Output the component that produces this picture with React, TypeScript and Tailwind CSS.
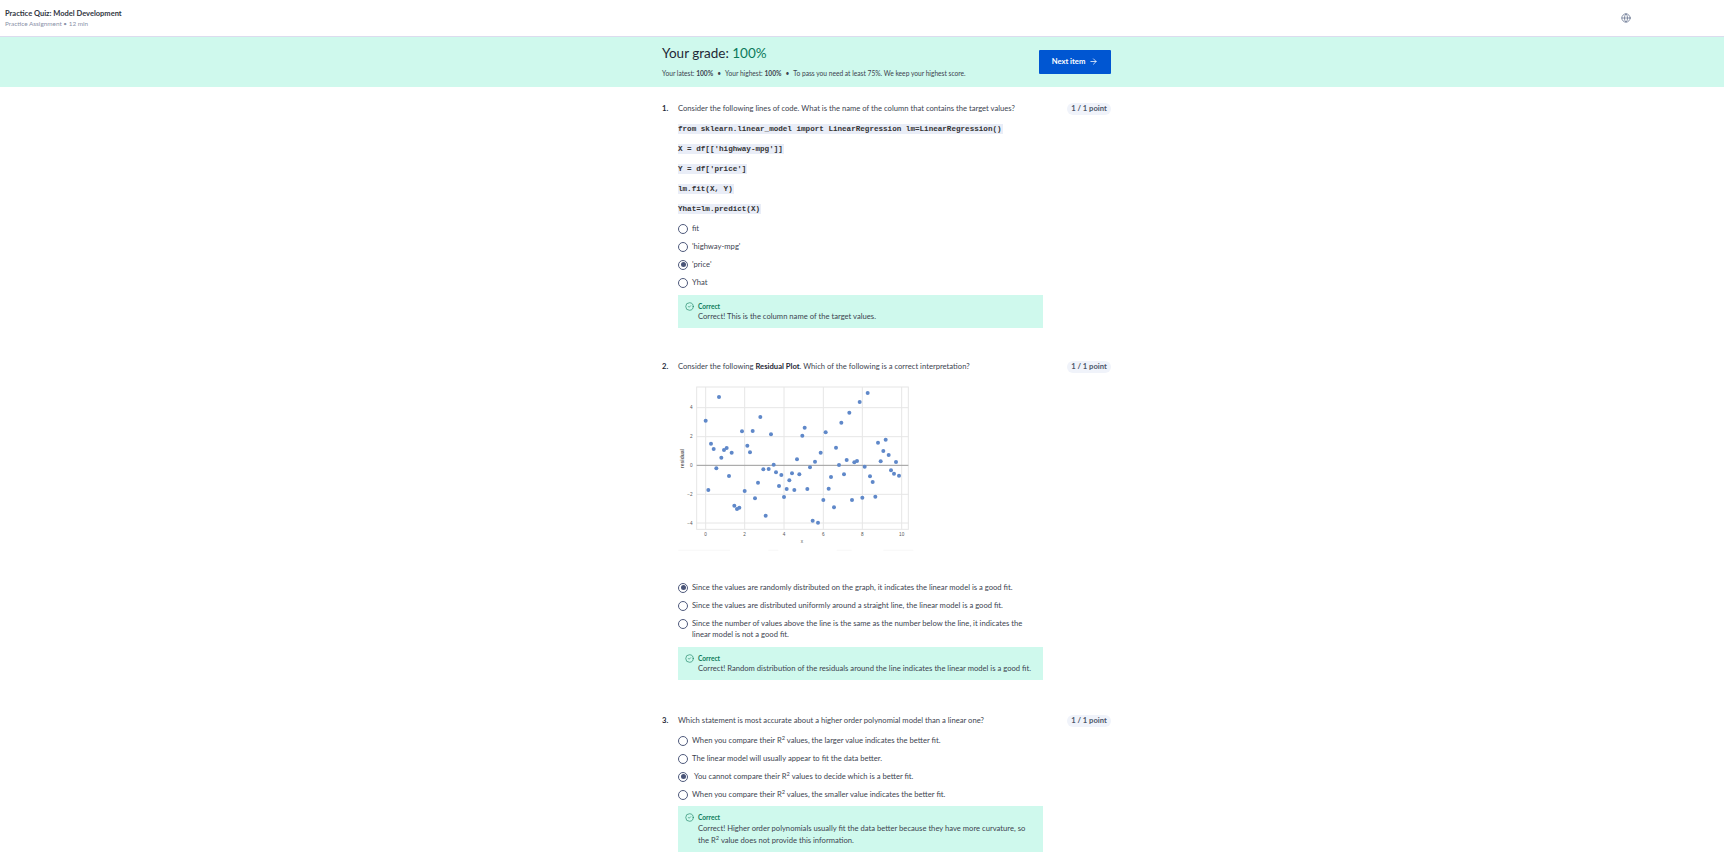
import { ArrowRight, CircleCheck, Globe } from "lucide-react";
import type { ReactNode } from "react";

const dots = [
  [107, 134], [115, 342], [123, 203], [131, 219], [139, 277], [147, 63], [154, 245], [162, 222], [170, 216], [177, 300],
  [185, 230], [193, 389], [201, 399], [208, 395], [216, 166], [224, 345], [232, 209], [240, 229], [248, 165], [255, 367],
  [264, 320], [271, 123], [280, 280], [287, 419], [296, 279], [303, 175], [311, 266], [318, 289], [327, 330], [334, 297],
  [342, 363], [350, 339], [358, 313], [366, 292], [373, 342], [381, 250], [388, 295], [397, 179], [404, 155], [412, 339],
  [420, 274], [428, 434], [435, 257], [444, 440], [452, 230], [460, 372], [467, 169], [476, 338], [483, 303], [492, 394],
  [498, 215], [507, 267], [514, 140], [522, 295], [530, 252], [538, 110], [546, 372], [553, 259], [561, 255], [569, 78],
  [577, 365], [584, 272], [593, 51], [600, 301], [608, 318], [616, 362], [624, 200], [632, 256], [640, 225], [647, 191],
  [656, 237], [663, 283], [672, 293], [678, 258], [687, 299],
];

const xTicks = [[107, "0"], [224, "2"], [342, "4"], [460, "6"], [577, "8"], [695, "10"]] as const;
const yTicks = [[95, "4"], [182, "2"], [268, "0"], [355, "−2"], [441, "−4"]] as const;

const codeLines = [
  "from sklearn.linear_model import LinearRegression lm=LinearRegression()",
  "X = df[['highway-mpg']]",
  "Y = df['price']",
  "lm.fit(X, Y)",
  "Yhat=lm.predict(X)",
];

function QuestionRow({ n, children, className }: { n: number; children: ReactNode; className: string }) {
  return (
    <div className={`flex items-start ${className}`}>
      <span className="w-[16px] font-bold leading-[12px] text-[#1f2937]">{n}.</span>
      <p className="flex-1 leading-[12px] text-[#3d4450]">{children}</p>
      <span className="mt-[1px] flex h-[12px] w-[44px] items-center justify-center rounded-full bg-[#f0f3fa] text-[7.6px] font-bold text-[#4b5568]">
        1 / 1 point
      </span>
    </div>
  );
}

function Option({ checked, children }: { checked?: boolean; children: ReactNode }) {
  return (
    <div className="flex items-start py-[3.5px] pl-[16px]">
      <span className="relative mt-[1px] mr-[4px] flex h-[10px] w-[10px] shrink-0 items-center justify-center rounded-full border-[1.2px] border-[#4f5a7c]">
        {checked && <span className="h-[5px] w-[5px] rounded-full bg-[#4a5578]" />}
      </span>
      <span className="w-[339px] leading-[11px] text-[#3d4450]">{children}</span>
    </div>
  );
}

function Feedback({ className, children }: { className: string; children: ReactNode }) {
  return (
    <div className={`ml-[16px] w-[365px] bg-[#cff9ed] pt-[6px] pl-[7px] ${className}`}>
      <div className="flex items-center gap-[4px] text-[6.6px] font-bold leading-[10px] text-[#0b7a5a]">
        <CircleCheck size={9} strokeWidth={1.6} />
        <span>Correct</span>
      </div>
      <p className="pl-[13px] text-[#3d4450]">{children}</p>
    </div>
  );
}

function ResidualPlot() {
  return (
    <svg width={260} height={185} viewBox="0 0 780 555" className="mt-[3px] ml-[8px] block">
      <rect x={80} y={33} width={635} height={427} fill="none" stroke="#e6e6e6" strokeWidth={3} />
      {xTicks.map(([x, label]) => (
        <g key={label}>
          <line x1={x} x2={x} y1={33} y2={460} stroke="#e6e6e6" strokeWidth={3} />
          <text x={x} y={481} textAnchor="middle" fontSize={14} fill="#555" fontFamily="Liberation Sans, sans-serif">{label}</text>
        </g>
      ))}
      {yTicks.map(([y, label]) => (
        <g key={label}>
          <line x1={80} x2={715} y1={y} y2={y} stroke="#e6e6e6" strokeWidth={3} />
          <text x={68} y={y + 5} textAnchor="end" fontSize={14} fill="#555" fontFamily="Liberation Sans, sans-serif">{label}</text>
        </g>
      ))}
      <line x1={80} x2={715} y1={268} y2={268} stroke="#555" strokeWidth={1.5} />
      {dots.map(([x, y], i) => (
        <circle key={i} cx={x} cy={y} r={6} fill="#5f88c9" />
      ))}
      <text x={396} y={502} textAnchor="middle" fontSize={14} fill="#555" fontFamily="Liberation Sans, sans-serif">x</text>
      <text x={41} y={248} textAnchor="middle" fontSize={15} fontWeight={700} fill="#666" fontFamily="Liberation Sans, sans-serif" transform="rotate(-90 41 248)">residual</text>
      <path d="M25 523H180M295 523H325M500 523H545M640 523H730" stroke="#f5f5f5" strokeWidth={2} />
    </svg>
  );
}

export default function App() {
  return (
    <div className="min-h-[866px] bg-white font-['Lato',sans-serif] text-[7.65px] text-[#3d4450]">
      <header className="flex h-[37px] items-center justify-between border-b border-[#dcdcee] pr-[91px] pl-[5px]">
        <div className="mb-[1px]">
          <div className="text-[7.5px] font-bold leading-[11px] text-[#30353f]">Practice Quiz: Model Development</div>
          <div className="text-[6.4px] leading-[9px] text-[#8a92a8]">Practice Assignment • 12 min</div>
        </div>
        <Globe size={10} strokeWidth={1.8} className="mr-[2px] mb-[1px] text-[#667390]" />
      </header>

      <section className="h-[50px] bg-[#cff9ed]">
        <div className="ml-[662px] flex w-[449px] items-center justify-between pt-[6px]">
          <div>
            <div className="text-[13.5px] leading-[20px] text-[#1f2937]">
              Your grade: <span className="text-[#0b7a5a]">100%</span>
            </div>
            <div className="mt-[6px] flex text-[6.65px] leading-[9px] text-[#3d4450]">
              <span>Your latest: <b>100%</b></span>
              <span className="mx-[4px]">•</span>
              <span>Your highest: <b>100%</b></span>
              <span className="mx-[4px]">•</span>
              <span>To pass you need at least 75%. We keep your highest score.</span>
            </div>
          </div>
          <button className="mt-[2px] flex h-[24px] w-[72px] items-center justify-center gap-[4px] rounded-[1px] bg-[#0056d2] text-[7.65px] font-bold text-white">
            Next item <ArrowRight size={9} strokeWidth={2} />
          </button>
        </div>
      </section>

      <main className="ml-[662px] w-[449px] pb-[14px]">
        <QuestionRow n={1} className="mt-[15px]">
          Consider the following lines of code. What is the name of the column that contains the target values?
        </QuestionRow>
        <div className="mt-[9px] ml-[16px] flex flex-col items-start gap-[10px]">
          {codeLines.map((line) => (
            <code key={line} className="h-[10px] bg-[#e9edf7] pr-[1px] font-['Liberation_Mono',monospace] text-[7.6px] font-bold leading-[10px] text-[#333]">
              {line}
            </code>
          ))}
        </div>
        <div className="mt-[5px]">
          <Option>fit</Option>
          <Option>'highway-mpg'</Option>
          <Option checked>'price'</Option>
          <Option>Yhat</Option>
        </div>
        <Feedback className="mt-[4px] pr-[4px] pb-[6px] leading-[11px]">Correct! This is the column name of the target values.</Feedback>

        <QuestionRow n={2} className="mt-[32px]">
          Consider the following <b className="text-[#1f2937]">Residual Plot</b>. Which of the following is a correct interpretation?
        </QuestionRow>
        <ResidualPlot />
        <div className="mt-[17px]">
          <Option checked>Since the values are randomly distributed on the graph, it indicates the linear model is a good fit.</Option>
          <Option>Since the values are distributed uniformly around a straight line, the linear model is a good fit.</Option>
          <Option>Since the number of values above the line is the same as the number below the line, it indicates the linear model is not a good fit.</Option>
        </div>
        <Feedback className="mt-[4px] pr-[4px] pb-[6px] leading-[11px]">Correct! Random distribution of the residuals around the line indicates the linear model is a good fit.</Feedback>

        <QuestionRow n={3} className="mt-[34px]">
          Which statement is most accurate about a higher order polynomial model than a linear one?
        </QuestionRow>
        <div className="mt-[4px]">
          <Option>When you compare their R<sup>2</sup> values, the larger value indicates the better fit.</Option>
          <Option>The linear model will usually appear to fit the data better.</Option>
          <Option checked><span className="ml-[2px]">You cannot compare their R<sup>2</sup> values to decide which is a better fit.</span></Option>
          <Option>When you compare their R<sup>2</sup> values, the smaller value indicates the better fit.</Option>
        </div>
        <Feedback className="mt-[3px] pr-[16px] pb-[6px] leading-[12px]">
          Correct! Higher order polynomials usually fit the data better because they have more curvature, so the R<sup>2</sup> value does not provide this information.
        </Feedback>
      </main>
    </div>
  );
}
